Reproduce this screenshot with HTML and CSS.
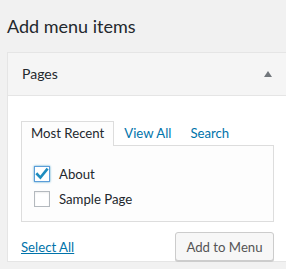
FILE: index.html
```html
<!DOCTYPE html>
<html>
<head>
<meta charset="utf-8">
<link rel="stylesheet" href="styles.css">
</head>
<body>
<h2 class="title">Add menu items</h2>
<div class="panel">
  <div class="panel-head">
    <span class="panel-title">Pages</span>
    <span class="arrow"></span>
  </div>
  <div class="panel-body">
    <ul class="tabs">
      <li class="tab active">Most Recent</li>
      <li class="tab"><a href="#">View All</a></li>
      <li class="tab"><a href="#">Search</a></li>
    </ul>
    <div class="tab-panel">
      <label class="item"><span class="cb checked"><svg viewBox="0 0 16 16" width="16" height="16"><path d="M3.2 8.2 L6.4 11.6 L12.8 3.6" fill="none" stroke="#1e8cbe" stroke-width="2.6" stroke-linecap="square"/></svg></span>About</label>
      <label class="item"><span class="cb"></span>Sample Page</label>
    </div>
    <div class="actions">
      <a href="#" class="select-all">Select All</a>
      <button class="btn">Add to Menu</button>
    </div>
  </div>
</div>
</body>
</html>
```
FILE: styles.css
```css
html, body {
  margin: 0;
  padding: 0;
  background: #f1f1f1;
  font-family: Lato, "Open Sans", sans-serif;
  color: #23282d;
  font-size: 13px;
}
.title {
  margin: 0;
  padding: 14px 0 0 7px;
  height: 52px;
  box-sizing: border-box;
  font-size: 18px;
  font-weight: 400;
  line-height: 24px;
}
.panel {
  margin-left: 7px;
  width: 300px;
  border: 1px solid #e5e5e5;
  background: #fff;
}
.panel-head {
  height: 42px;
  background: #f5f5f5;
  border-bottom: 1px solid #e5e5e5;
  display: flex;
  align-items: center;
  padding-left: 14px;
  position: relative;
}
.panel-title {
  font-size: 14px;
  line-height: 20px;
}
.arrow {
  position: absolute;
  left: 256px;
  top: 18px;
  width: 0;
  height: 0;
  border-left: 4px solid transparent;
  border-right: 4px solid transparent;
  border-bottom: 6px solid #72777c;
}
.panel-body {
  padding: 25px 0 0 13px;
  width: 253px;
}
.tabs {
  list-style: none;
  margin: 0;
  padding: 0;
  display: flex;
  height: 24px;
}
.tab {
  padding: 0 9px;
  line-height: 23px;
  font-size: 13.2px;
  border: 1px solid transparent;
  border-bottom: none;
}
.tab a {
  color: #0073aa;
  text-decoration: none;
}
.tab.active {
  border-color: #ddd;
  background: #fdfdfd;
  position: relative;
  z-index: 1;
  height: 24px;
}
.tab:nth-child(2) { padding-left: 9px; padding-right: 9px; }
.tab:nth-child(3) { padding-left: 8px; }
.tab-panel {
  border: 1px solid #ddd;
  background: #fdfdfd;
  height: 77px;
  box-sizing: border-box;
  padding: 20px 0 0 12px;
  display: flex;
  flex-direction: column;
  gap: 9px;
}
.item {
  display: flex;
  align-items: center;
  height: 16px;
  font-size: 13.2px;
  line-height: 16px;
}
.cb {
  width: 16px;
  height: 16px;
  box-sizing: border-box;
  border: 1px solid #b4b9be;
  background: #fff;
  margin-right: 9px;
  box-shadow: inset 0 1px 2px rgba(0,0,0,0.07);
  display: block;
  position: relative;
}
.cb.checked {
  border-color: #5b9dd9;
  box-shadow: 0 0 2px rgba(30,140,190,0.8);
}
.cb svg {
  position: absolute;
  left: -1px;
  top: -1px;
}
.actions {
  display: flex;
  justify-content: space-between;
  align-items: center;
  padding-top: 10px;
}
.select-all {
  color: #0073aa;
  text-decoration: underline;
  font-size: 13.2px;
  margin-top: 1px;
}
.btn {
  height: 29px;
  padding: 0;
  border: 1px solid #ccc;
  border-radius: 3px;
  background: #f7f7f7;
  box-shadow: 0 1px 0 #ccc;
  color: #555;
  font-family: Lato, "Open Sans", sans-serif;
  font-size: 13.2px;
  width: 99px;
}
```
